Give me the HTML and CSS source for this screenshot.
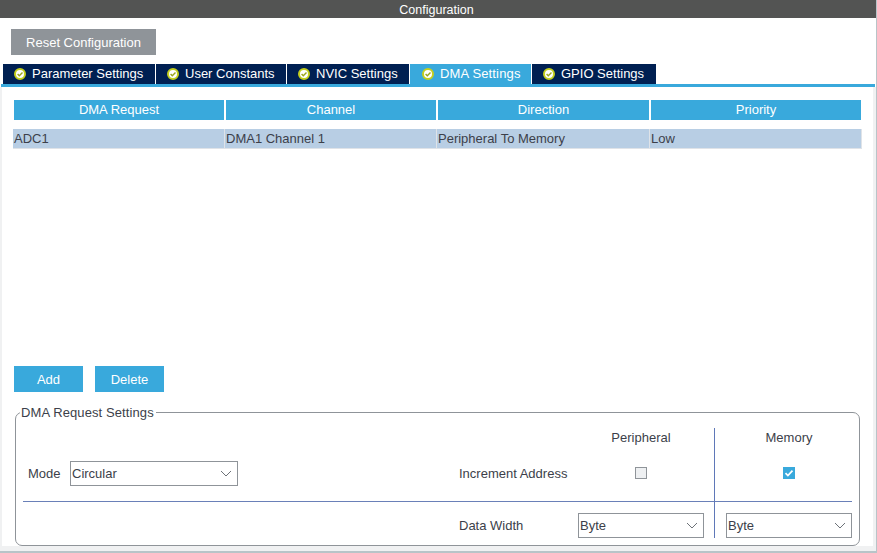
FILE: index.html
```html
<!DOCTYPE html>
<html lang="en">
<head>
    <meta charset="UTF-8">
    <meta name="viewport" content="width=device-width, initial-scale=1.0">
    <title>Configuration</title>
    <link rel="stylesheet" href="styles.css">
</head>
<body>
    <div class="titlebar">Configuration</div>
    <div class="toolbar">
        <button class="reset-btn">Reset Configuration</button>
    </div>
    <div class="tabs">
        <div class="tab tab-param"><svg class="ok" viewBox="0 0 12 12"><circle cx="6" cy="6" r="5"/><path d="M3.6 6l1.7 1.8 3.2-3.3"/></svg>Parameter Settings</div>
        <div class="tab tab-user"><svg class="ok" viewBox="0 0 12 12"><circle cx="6" cy="6" r="5"/><path d="M3.6 6l1.7 1.8 3.2-3.3"/></svg>User Constants</div>
        <div class="tab tab-nvic"><svg class="ok" viewBox="0 0 12 12"><circle cx="6" cy="6" r="5"/><path d="M3.6 6l1.7 1.8 3.2-3.3"/></svg>NVIC Settings</div>
        <div class="tab tab-dma active"><svg class="ok" viewBox="0 0 12 12"><circle cx="6" cy="6" r="5"/><path d="M3.6 6l1.7 1.8 3.2-3.3"/></svg>DMA Settings</div>
        <div class="tab tab-gpio"><svg class="ok" viewBox="0 0 12 12"><circle cx="6" cy="6" r="5"/><path d="M3.6 6l1.7 1.8 3.2-3.3"/></svg>GPIO Settings</div>
    </div>
    <div class="panel">
        <div class="grid-head">
            <div>DMA Request</div>
            <div>Channel</div>
            <div>Direction</div>
            <div>Priority</div>
        </div>
        <div class="grid-row">
            <div>ADC1</div>
            <div>DMA1 Channel 1</div>
            <div>Peripheral To Memory</div>
            <div>Low</div>
        </div>
        <div class="actions">
            <button class="action-btn">Add</button>
            <button class="action-btn">Delete</button>
        </div>
        <div class="settings">
            <div class="settings-title">DMA Request Settings</div>
            <div class="settings-body">
                <div class="mode-col">
                    <span class="mode-label">Mode</span>
                    <div class="select select-mode">Circular<svg class="caret" viewBox="0 0 12 7"><path d="M1 1l5 5 5-5"/></svg></div>
                </div>
                <div class="addr-col">
                    <div class="addr-head">
                        <span class="col-periph">Peripheral</span>
                        <span class="col-mem">Memory</span>
                    </div>
                    <div class="addr-row">
                        <span class="row-label">Increment Address</span>
                        <span class="col-periph"><span class="check"></span></span>
                        <span class="col-mem"><span class="check checked"><svg viewBox="0 0 12 12"><path d="M2.5 6.2l2.4 2.4 4.6-5"/></svg></span></span>
                    </div>
                </div>
                <div class="divider"></div>
                <div class="width-row">
                    <span class="row-label">Data Width</span>
                    <div class="select select-width">Byte<svg class="caret" viewBox="0 0 12 7"><path d="M1 1l5 5 5-5"/></svg></div>
                    <div class="select select-width">Byte<svg class="caret" viewBox="0 0 12 7"><path d="M1 1l5 5 5-5"/></svg></div>
                </div>
                <div class="vline"></div>
            </div>
        </div>
    </div>
</body>
</html>
```

FILE: styles.css
```css
* {
    box-sizing: border-box;
}
html, body {
    height: 100%;
}
body {
    margin: 0;
    overflow: hidden;
    display: flex;
    flex-direction: column;
    font-family: "Liberation Sans", Arial, sans-serif;
    font-size: 13px;
    color: #3c3f4a;
    background: #fff;
    border-right: 1px solid #b8c4c8;
    border-bottom: 2px solid #b8c4c8;
}
.titlebar {
    height: 18px;
    line-height: 20px;
    flex: none;
    text-align: center;
    font-size: 12.5px;
    color: #fff;
    background: #535453;
    padding-right: 3px;
}
.toolbar {
    height: 46px;
    flex: none;
    padding: 11px 0 0 11px;
}
.reset-btn {
    width: 145px;
    height: 26px;
    padding: 0;
    border: none;
    background: #8f9499;
    color: #fff;
    font: inherit;
}
.tabs {
    display: flex;
    height: 23px;
    flex: none;
    margin: 0 1px 0 1px;
    padding-left: 2px;
    border-bottom: 3px solid #39a9dc;
}
.tab {
    display: flex;
    align-items: center;
    height: 20px;
    padding-left: 11px;
    padding-bottom: 1px;
    margin-right: 1px;
    color: #fff;
    background: #002052;
    white-space: nowrap;
}
.tab.active {
    background: #39a9dc;
    padding-left: 12px;
    letter-spacing: 0.15px;
}
.tab-param { width: 152px; }
.tab-user { width: 130px; }
.tab-nvic { width: 122px; }
.tab-dma { width: 121px; }
.tab-gpio { width: 124px; margin-right: 0; }
.ok {
    width: 12px;
    height: 12px;
    margin-right: 6px;
    flex: none;
}
.ok circle {
    fill: #fff;
    stroke: #c4cf1e;
    stroke-width: 2;
}
.ok path {
    fill: none;
    stroke: #9aa51a;
    stroke-width: 1.4;
}
.panel {
    flex: 1;
    display: flex;
    flex-direction: column;
    border-left: 2px solid #f0f1f2;
    border-right: 3px solid #f0f1f2;
    border-bottom: 5px solid #f0f1f2;
    padding: 13px 12px 0 11px;
}
.grid-head, .grid-row {
    display: grid;
    grid-template-columns: 212px 212px 213px 212px;
}
.grid-head {
    height: 18px;
    margin-left: 1px;
    margin-right: -1px;
}
.grid-head div {
    line-height: 20px;
    margin-right: 2px;
    text-align: center;
    color: #fff;
    background: #39a9dc;
}
.grid-row {
    height: 20px;
    margin-top: 11px;
}
.grid-row div {
    line-height: 19px;
    padding-left: 1px;
    background: #b8cee4;
    border-right: 1px solid #dfe3e8;
    border-bottom: 1px solid #dfe3e8;
}
.actions {
    display: flex;
    gap: 12px;
    margin: auto 0 0 1px;
}
.action-btn {
    width: 69px;
    height: 26px;
    padding: 0;
    border: none;
    background: #39a9dc;
    color: #fff;
    font: inherit;
}
.settings {
    position: relative;
    height: 134px;
    margin: 20px 1px 0 2px;
    border: 1px solid #8f9499;
    border-radius: 7px;
    flex: none;
}
.settings-title {
    position: absolute;
    top: -8px;
    left: 4px;
    background: #fff;
    padding: 0 2px 0 1px;
    line-height: 15px;
    letter-spacing: 0.1px;
}
.settings-body {
    position: relative;
    height: 100%;
}
.mode-col {
    position: absolute;
    left: 12px;
    top: 48px;
    display: flex;
    align-items: center;
}
.mode-label {
    width: 42px;
}
.select {
    display: flex;
    align-items: center;
    justify-content: space-between;
    height: 25px;
    padding: 0 5px 0 1px;
    border: 1px solid #8f9499;
    background: #fff;
}
.select-mode {
    width: 168px;
}
.select-width {
    width: 126px;
}
.caret {
    width: 12px;
    height: 7px;
    flex: none;
}
.caret path {
    fill: none;
    stroke: #6d7278;
    stroke-width: 1;
}
.addr-col {
    position: absolute;
    left: 443px;
    top: 17px;
}
.addr-head, .addr-row {
    display: grid;
    grid-template-columns: 97px 126px 126px;
    column-gap: 22px;
    justify-items: center;
    align-items: center;
}
.addr-head {
    height: 15px;
}
.addr-head .col-periph {
    grid-column: 2;
}
.addr-row {
    height: 16px;
    margin-top: 20px;
}
.addr-row .row-label {
    justify-self: start;
    white-space: nowrap;
}
.check {
    display: block;
    width: 12px;
    height: 12px;
    background: #eef0f2;
    border: 1px solid #8f9499;
}
.check.checked {
    background: #39a9dc;
    border: none;
}
.check svg {
    display: block;
    width: 12px;
    height: 12px;
}
.check path {
    fill: none;
    stroke: #fff;
    stroke-width: 1.7;
}
.divider {
    position: absolute;
    left: 7px;
    right: 7px;
    top: 88px;
    height: 1px;
    background: #6a80b8;
}
.vline {
    position: absolute;
    left: 698px;
    top: 15px;
    height: 110px;
    width: 1px;
    background: #5f78b8;
}
.width-row {
    position: absolute;
    left: 443px;
    top: 100px;
    display: flex;
    align-items: center;
}
.width-row .row-label {
    width: 119px;
}
.width-row .select + .select {
    margin-left: 22px;
}
```
